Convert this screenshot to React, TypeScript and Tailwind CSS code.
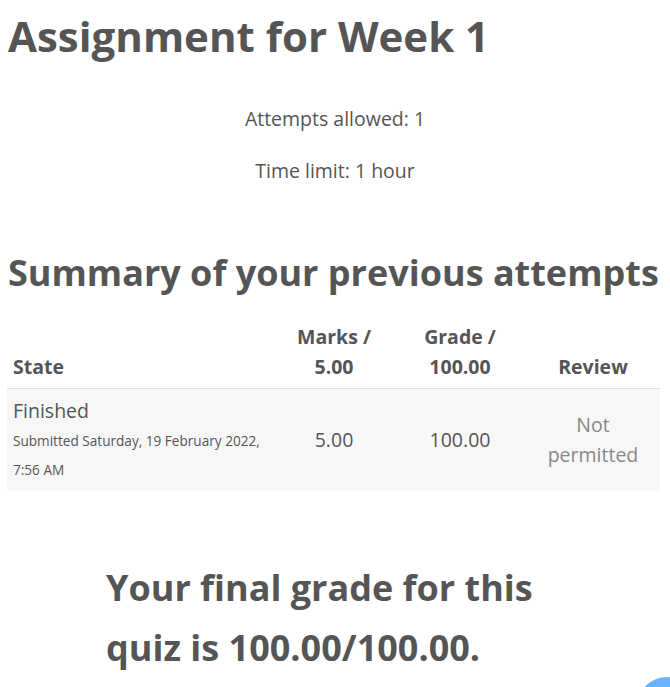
import React from 'react';

export default function App() {
  return (
    <div className="relative min-h-[687px] overflow-hidden bg-white text-[#555] font-['Open_Sans',sans-serif]">
      <div className="px-2 pt-[6px]">
        <h1 className="text-[42px] font-bold leading-[60px]">Assignment for Week 1</h1>

        <div className="mt-[40px] text-center text-[19.5px] leading-[26px]">
          <p>Attempts allowed: 1</p>
          <p className="mt-[26px]">Time limit: 1 hour</p>
        </div>

        <h2 className="mt-[66px] text-[36px] font-bold leading-[46px]">Summary of your previous attempts</h2>

        <table className="mt-[26px] w-[653px] -ml-px table-fixed border-collapse text-[19.5px]">
          <thead>
            <tr className="border-b border-[#dee2e6] align-bottom font-bold leading-[30px]">
              <th className="w-[267px] px-[6px] pb-[6px] text-left">State</th>
              <th className="w-[120px] px-[6px] pb-[6px] text-center">Marks /<br />5.00</th>
              <th className="w-[132px] px-[6px] pb-[6px] text-center">Grade /<br />100.00</th>
              <th className="w-[134px] px-[6px] pb-[6px] text-center">Review</th>
            </tr>
          </thead>
          <tbody>
            <tr className="bg-[#f7f7f7] align-middle">
              <td className="px-[6px] py-[7px]">
                <div className="leading-[30px]">Finished</div>
                <div className="text-[13.6px] leading-[29px] whitespace-nowrap">
                  Submitted Saturday, 19 February 2022,<br />7:56 AM
                </div>
              </td>
              <td className="px-[6px] text-center">5.00</td>
              <td className="px-[6px] text-center">100.00</td>
              <td className="px-[6px] text-center leading-[30px] text-[#888]">Not<br />permitted</td>
            </tr>
          </tbody>
        </table>

        <h3 className="ml-[98px] mt-[67px] text-[36px] font-bold leading-[60px]">
          Your final grade for this<br />quiz is 100.00/100.00.
        </h3>
      </div>

      <div className="absolute left-[637px] top-[677px] h-[60px] w-[60px] rounded-full bg-[#6ab4ff]" />
    </div>
  );
}
